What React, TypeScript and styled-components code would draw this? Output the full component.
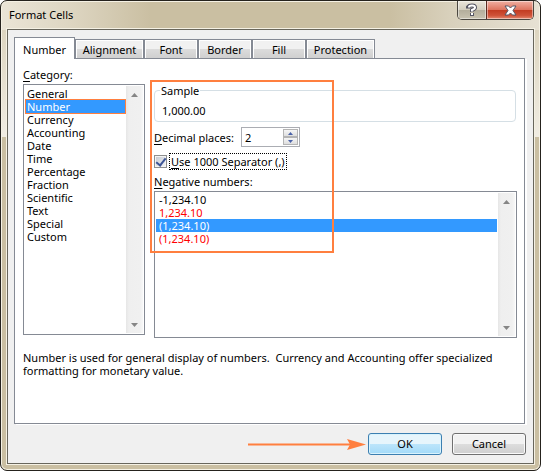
import React, { useState } from "react";
import styled, { createGlobalStyle, css } from "styled-components";

const ink = "#000";
const line = "#858a94";
const face = "#f0f0f0";
const blue = "#3399ff";
const orange = "#ff7f3f";

const GlobalStyle = createGlobalStyle`
  * { box-sizing: border-box; }
  body { margin: 0; background: #fff; }
  body, button, input { font-family: "Noto Sans", "Open Sans", sans-serif; font-size: 11px; color: ${ink}; }
  button { cursor: default; }
`;

const Window = styled.main`
  border: 1px solid #25221d;
  border-radius: 7px;
  padding: 0 5px 5px;
  box-shadow: inset 0 0 0 1px #f5f1e4;
  background:
    linear-gradient(90deg, rgba(245, 241, 232, 0.75) 0, rgba(245, 241, 232, 0.45) 70px, transparent 150px) top / 100% 29px no-repeat,
    linear-gradient(270deg, rgba(238, 234, 224, 0.8) 0, rgba(226, 220, 205, 0.6) 90px, transparent 150px) top / 100% 29px no-repeat,
    linear-gradient(#ddd5c0, #f0ece2 100%) 0 29px / 100% 107px no-repeat,
    #cabfa2;
`;

const TitleBar = styled.header`
  display: flex;
  justify-content: space-between;
  height: 27px;
  padding: 0 1px 0 3px;
`;

const Title = styled.h1`
  margin: 0;
  font-size: 11px;
  font-weight: 400;
  line-height: 28px;
`;

const Controls = styled.div`
  display: flex;
  height: 19px;
  border: 1px solid #4b4740;
  border-top: 0;
  border-radius: 0 0 5px 5px;
  overflow: hidden;
`;

const Control = styled.button<{ $close?: boolean }>`
  display: grid;
  place-items: center;
  width: ${(p) => (p.$close ? 47 : 28)}px;
  padding: 0;
  border: 0;
  border-left: ${(p) => (p.$close ? "1px solid #5a2a20" : "0")};
  box-shadow: inset 0 0 0 1px rgba(255, 255, 255, 0.45);
  background: ${(p) =>
    p.$close
      ? "linear-gradient(#f0b0a2, #dd7560 48%, #c23a20 50%, #cf5238 80%, #e58a70)"
      : "linear-gradient(#e9e5da, #d3cebf 48%, #b3ad9b 50%, #c8c2b0)"};
`;

const Client = styled.div`
  border: 1px solid #68665c;
  outline: 1px solid #f5f1e4;
  margin: 1px;
  padding: 7px 8px 8px 6px;
  background: ${face};
`;

const TabStrip = styled.div`
  display: flex;
  align-items: flex-end;
`;

const Tab = styled.button<{ $active?: boolean; $width: number }>`
  width: ${(p) => p.$width}px;
  height: 19px;
  padding: 2px 0 0;
  border: 1px solid ${line};
  border-bottom: 0;
  line-height: 16px;
  box-shadow: inset 1px 1px #fff, inset -1px 0 #fff;
  background: linear-gradient(#f1f1f1 50%, #dcdcdc 50%, #d0d0d0);
  ${(p) =>
    p.$active &&
    css`
      height: 22px;
      margin-bottom: -1px;
      background: #fff;
      position: relative;
    `}
`;

const Panel = styled.section`
  border: 1px solid ${line};
  padding: 8px 7px 46px 8px;
  box-shadow: 2px 1px #fff;
  background: #fff;
`;

const Columns = styled.div`
  position: relative;
  display: grid;
  grid-template-columns: 122px minmax(0, 1fr);
  gap: 9px;
`;

const Column = styled.div`
  display: flex;
  flex-direction: column;
  align-items: stretch;
`;

const Caption = styled.div`
  height: 17px;
  line-height: 16px;
`;

const Key = styled.span`
  text-decoration: underline;
  text-underline-offset: 2px;
`;

const ListFrame = styled.div<{ $height: number }>`
  display: grid;
  grid-template-columns: minmax(0, 1fr) 17px;
  gap: 1px;
  height: ${(p) => p.$height}px;
  padding: 1px;
  border: 1px solid ${line};
`;

const List = styled.ul<{ $inset?: boolean }>`
  margin: ${(p) => (p.$inset ? "1px 0 0 1px" : "0")};
  padding: 0;
  list-style: none;
`;

const Option = styled.li<{ $red?: boolean; $marked?: boolean }>`
  height: 13px;
  padding-left: ${(p) => (p.$marked ? 1 : 3)}px;
  line-height: 13px;
  color: ${(p) => (p.$red ? "#f00" : ink)};
  &[aria-selected="true"] {
    color: #fff;
    background: ${blue};
    outline: ${(p) => (p.$marked ? `1px solid ${orange}` : "0")};
  }
`;

const ScrollBar = styled.div`
  display: flex;
  flex-direction: column;
  justify-content: space-between;
  background: linear-gradient(90deg, #e6e6e6, #efefef 3px, #f0f0f0 14px, #f8f8f8);
`;

const ScrollButton = styled.button`
  display: grid;
  place-items: center;
  height: 17px;
  padding: 0;
  border: 0;
  background: none;
`;

const Group = styled.fieldset`
  height: 38px;
  margin: 17px 1px 5px 0;
  padding: 6px 7px 0;
  border: 1px solid #d5dfe5;
  border-radius: 4px;
  min-width: 0;
  line-height: 16px;
`;

const Legend = styled.legend`
  margin-left: -2px;
  padding: 0 1px;
  height: 13px;
  line-height: 13px;
`;

const Row = styled.div`
  display: flex;
  align-items: center;
`;

const SpinLabel = styled.label`
  width: 87px;
  white-space: nowrap;
`;

const Spinner = styled.div`
  display: flex;
  width: 59px;
  height: 20px;
  padding: 1px;
  border: 1px solid #abadb3;
`;

const SpinInput = styled.input`
  flex: 1;
  min-width: 0;
  padding: 0 0 0 2px;
  border: 0;
  outline: 0;
  background: #fff;
`;

const SpinButtons = styled.div`
  display: grid;
  grid-template-rows: 1fr 1fr;
  width: 15px;
`;

const SpinButton = styled.button`
  display: grid;
  place-items: center;
  padding: 0;
  border: 1px solid #b4b4b4;
  background: linear-gradient(#f6f6f6, #dedede);
`;

const CheckRow = styled.label`
  display: flex;
  align-items: center;
  align-self: flex-start;
  gap: 2px;
  height: 17px;
  margin: 6px 0 4px;
`;

const Check = styled.input`
  appearance: none;
  width: 13px;
  height: 13px;
  margin: 0;
  border: 1px solid #8e8f8f;
  box-shadow: inset 0 0 0 1px #f4f4f4;
  background: linear-gradient(135deg, #c3c8d0, #f4f5f7);
  display: grid;
  place-items: center;
  &:checked::after {
    content: "";
    width: 4px;
    height: 8px;
    margin-top: -2px;
    border: solid #3c5496;
    border-width: 0 2px 2px 0;
    transform: rotate(38deg);
  }
`;

const FocusText = styled.span`
  height: 17px;
  padding: 0 1px;
  border: 1px dotted #000;
  line-height: 15px;
  white-space: nowrap;
`;

const Highlight = styled.div`
  position: absolute;
  top: 13px;
  left: 127px;
  width: 184px;
  height: 173px;
  border: 2px solid ${orange};
  pointer-events: none;
`;

const Description = styled.p`
  margin: 13px 0 0;
  line-height: 13px;
`;

const Footer = styled.footer`
  display: flex;
  align-items: center;
  justify-content: flex-end;
  margin: 9px -1px 0 0;
`;

const Arrow = styled.svg`
  display: block;
  margin: 2px 1px 0 0;
`;

const DialogButton = styled.button<{ $primary?: boolean }>`
  width: 74px;
  height: 22px;
  margin-left: ${(p) => (p.$primary ? 0 : 10)}px;
  padding: 0;
  border: 1px solid ${(p) => (p.$primary ? "#3c7fb1" : "#707070")};
  border-radius: 3px;
  line-height: 20px;
  box-shadow: inset 0 0 0 1px ${(p) => (p.$primary ? "#d8f3fd" : "#fafafa")};
  background: ${(p) =>
    p.$primary
      ? "linear-gradient(#e6f5fc 50%, #bce5fb 50%, #a3daf8)"
      : "linear-gradient(#f2f2f2 50%, #dddddd 50%, #cfcfcf)"};
`;

const tabs: [string, number][] = [
  ["Number", 61], ["Alignment", 69], ["Font", 54], ["Border", 54], ["Fill", 54], ["Protection", 69],
];
const categories = [
  "General", "Number", "Currency", "Accounting", "Date", "Time",
  "Percentage", "Fraction", "Scientific", "Text", "Special", "Custom",
];
const negatives = [
  { text: "-1,234.10", red: false },
  { text: "1,234.10", red: true },
  { text: "(1,234.10)", red: false },
  { text: "(1,234.10)", red: true },
];

const Scroll = () => (
  <ScrollBar>
    <ScrollButton aria-label="Scroll up">
      <svg width="7" height="4"><path d="M0 4L3.5 0L7 4Z" fill="#858585" /></svg>
    </ScrollButton>
    <ScrollButton aria-label="Scroll down">
      <svg width="7" height="4"><path d="M0 0H7L3.5 4Z" fill="#858585" /></svg>
    </ScrollButton>
  </ScrollBar>
);

export default function App() {
  const [category, setCategory] = useState(1);
  const [negative, setNegative] = useState(2);
  const [places, setPlaces] = useState(2);

  return (
    <>
      <GlobalStyle />
      <Window>
        <TitleBar>
          <Title>Format Cells</Title>
          <Controls>
            <Control aria-label="Help">
              <svg width="12" height="14" viewBox="0 0 12 14" fill="none">
                <path d="M2 5.5V4Q3 2.5 6 2.5T9 4.5Q9 6 6 7V9M6 10V13" stroke="#555563" strokeWidth="4" />
                <path d="M3 4.5V4Q3 2.5 6 2.5T9 4.5Q9 6 6 7V8.5M6 10V12" stroke="#fff" strokeWidth="2" />
              </svg>
            </Control>
            <Control $close aria-label="Close">
              <svg width="13" height="11" viewBox="0 0 13 11">
                <path d="M1 1H4.5L6.5 3L8.5 1H12L9 5.5L12 10H8.5L6.5 8L4.5 10H1L4 5.5Z" fill="#fff" stroke="#535666" />
              </svg>
            </Control>
          </Controls>
        </TitleBar>
        <Client>
          <TabStrip role="tablist">
            {tabs.map(([name, width], i) => (
              <Tab key={name} role="tab" aria-selected={i === 0} $active={i === 0} $width={width}>{name}</Tab>
            ))}
          </TabStrip>
          <Panel role="tabpanel">
            <Columns>
              <Column>
                <Caption id="category"><Key>C</Key>ategory:</Caption>
                <ListFrame $height={251}>
                  <List $inset role="listbox" aria-labelledby="category">
                    {categories.map((c, i) => (
                      <Option key={c} role="option" $marked aria-selected={i === category} onClick={() => setCategory(i)}>{c}</Option>
                    ))}
                  </List>
                  <Scroll />
                </ListFrame>
              </Column>
              <Column>
                <Group>
                  <Legend>Sample</Legend>
                  1,000.00
                </Group>
                <Row>
                  <SpinLabel htmlFor="places"><Key>D</Key>ecimal places:</SpinLabel>
                  <Spinner>
                    <SpinInput id="places" value={places} onChange={(e) => setPlaces(Number(e.target.value) || 0)} />
                    <SpinButtons>
                      <SpinButton aria-label="Increase" onClick={() => setPlaces(places + 1)}>
                        <svg width="5" height="3"><path d="M0 3L2.5 0L5 3Z" fill="#4a62a8" /></svg>
                      </SpinButton>
                      <SpinButton aria-label="Decrease" onClick={() => setPlaces(Math.max(0, places - 1))}>
                        <svg width="5" height="3"><path d="M0 0H5L2.5 3Z" fill="#4a62a8" /></svg>
                      </SpinButton>
                    </SpinButtons>
                  </Spinner>
                </Row>
                <CheckRow>
                  <Check type="checkbox" defaultChecked />
                  <FocusText><Key>U</Key>se 1000 Separator (,)</FocusText>
                </CheckRow>
                <Caption id="negative"><Key>N</Key>egative numbers:</Caption>
                <ListFrame $height={147}>
                  <List role="listbox" aria-labelledby="negative">
                    {negatives.map((n, i) => (
                      <Option key={i} role="option" $red={n.red} aria-selected={i === negative} onClick={() => setNegative(i)}>{n.text}</Option>
                    ))}
                  </List>
                  <Scroll />
                </ListFrame>
              </Column>
              <Highlight />
            </Columns>
            <Description>
              Number is used for general display of numbers.&nbsp; Currency and Accounting offer specialized formatting for monetary value.
            </Description>
          </Panel>
          <Footer>
            <Arrow width="119" height="12" viewBox="0 0 119 12" aria-hidden="true">
              <path d="M0 5.5H104" stroke={orange} strokeWidth="2" />
              <path d="M99 0L118 5.5L99 11L102 5.5Z" fill={orange} />
            </Arrow>
            <DialogButton $primary>OK</DialogButton>
            <DialogButton>Cancel</DialogButton>
          </Footer>
        </Client>
      </Window>
    </>
  );
}
